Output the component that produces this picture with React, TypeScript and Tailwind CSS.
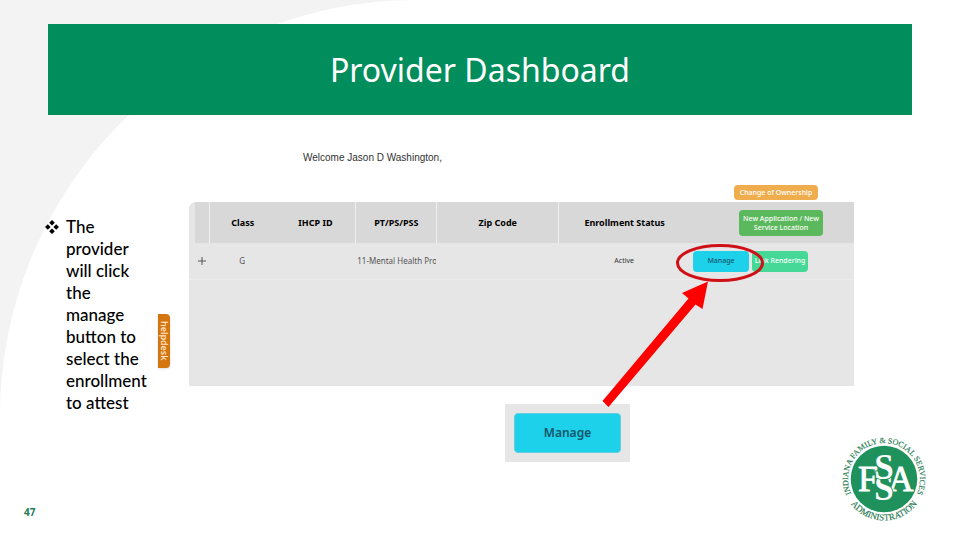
const headCell = "border-l border-[#f0f0f0] text-center align-middle";

function Backdrop() {
  return (
    <svg className="pointer-events-none absolute top-0 left-0 -z-10" width="416" height="416" viewBox="0 0 416 416" aria-hidden="true">
      <path d="M0 0H416A416 416 0 0 0 0 416Z" fill="#f3f3f3" />
    </svg>
  );
}

function DiamondBullet() {
  return (
    <svg className="mt-1 shrink-0" width="14" height="14" viewBox="0 0 14 14" aria-hidden="true">
      <path d="M7 0l2.8 2.8L7 5.6 4.2 2.8zM7 8.4l2.8 2.8L7 14l-2.8-2.8zM2.8 4.2L5.6 7 2.8 9.8 0 7zM11.2 4.2L14 7l-2.8 2.8L8.4 7z" />
    </svg>
  );
}

function Annotation() {
  return (
    <svg className="pointer-events-none absolute top-[125px] right-[84px]" width="170" height="170" viewBox="600 240 170 170" aria-hidden="true">
      <ellipse cx="720" cy="263" rx="42.5" ry="17.5" fill="none" stroke="#cf1016" strokeWidth="3" />
      <path d="M708 281.5L702.5 309L695.5 304.500L608.500 407L602.500 401L688.500 298.500L682 293Z" fill="#fe0000" />
    </svg>
  );
}

function AgencyLogo() {
  return (
    <svg width="90" height="90" viewBox="-45 -45 90 90" role="img" aria-label="Indiana Family & Social Services Administration">
      <defs>
        <path id="ring-top" d="M-31.200 18A36 36 0 1 1 31.200 18" />
        <path id="ring-bottom" d="M-41.500 0A41.500 41.500 0 0 0 41.500 0" />
      </defs>
      <circle r="33.300" fill="#1f915c" />
      <g fill="#1f7a50" fontFamily="'Liberation Serif', serif" fontSize="8" textAnchor="middle" stroke="#1f7a50" strokeWidth=".15">
        <text>
          <textPath href="#ring-top" startOffset="50%">INDIANA FAMILY &amp; SOCIAL SERVICES</textPath>
        </text>
        <text fontSize="9">
          <textPath href="#ring-bottom" startOffset="50%">ADMINISTRATION</textPath>
        </text>
      </g>
      <g fill="#fff" fontFamily="'Liberation Serif', serif" textAnchor="middle" stroke="#fff" strokeWidth=".8">
        <text x="-16" y="12" fontSize="36">F</text>
        <text x="17" y="12" fontSize="35">A</text>
        <g fontWeight="bold" stroke="#1f915c" strokeWidth="1.800" paintOrder="stroke">
          <text x="0" y="21" fontSize="35">S</text>
          <text x="0" y="0" fontSize="35">S</text>
        </g>
      </g>
    </svg>
  );
}

function ProviderTable() {
  return (
    <div className="h-[184px] overflow-hidden rounded-tl-lg bg-[#e6e6e6] font-['Noto_Sans',sans-serif]">
      <table className="w-full table-fixed border-separate border-spacing-0">
        <colgroup>
          <col className="w-5" />
          <col className="w-[10%]" />
          <col className="w-[12%]" />
          <col className="w-[81px]" />
          <col className="w-[122px]" />
          <col />
          <col className="w-[164px]" />
        </colgroup>
        <thead>
          <tr className="h-[41px] bg-[#d8d8d8] text-[9px] leading-3 text-black">
            <th className="border-l-6 border-[#e6e6e6]" aria-label="Expand" />
            <th className={headCell}>Class</th>
            <th className="text-center">IHCP ID</th>
            <th className={headCell}>PT/PS/PSS</th>
            <th className={headCell}>Zip Code</th>
            <th className={headCell}>Enrollment Status</th>
            <th className="p-0 pr-[31px] text-right align-middle">
              <button className="h-[26px] w-[84px] rounded-sm bg-[#5cb85c] text-[7px] leading-[9px] font-medium text-white">
                New Application / New Service Location
              </button>
            </th>
          </tr>
        </thead>
        <tbody>
          <tr className="h-[37px] text-[8px] leading-3 text-[#555]">
            <td className="border-b border-[#ebebeb] p-0 pl-2">
              <button className="block" aria-label="Expand row">
                <svg width="10" height="10" viewBox="0 0 10 10" stroke="#555"><path d="M5 1v8M1 5h8" /></svg>
              </button>
            </td>
            <td className="border-b border-[#ebebeb] text-center">G</td>
            <td className="border-b border-[#ebebeb]" />
            <td className="overflow-hidden border-b border-[#ebebeb] p-0 pl-0.5 whitespace-nowrap">11-Mental Health Prov</td>
            <td className="border-b border-[#ebebeb]" />
            <td className="border-b border-[#ebebeb] text-center text-[7px] text-[#333]">Active</td>
            <td className="border-b border-[#ebebeb] p-0 pl-[3px]">
              <div className="flex gap-[3px]">
                <button className="h-[21px] w-14 rounded-sm bg-[#1dd1ea] text-[7px] font-medium text-[#14556a]">Manage</button>
                <button className="h-[21px] w-14 rounded-sm bg-[#45d896] text-[7px] font-medium whitespace-nowrap text-white">Link Rendering</button>
              </div>
            </td>
          </tr>
        </tbody>
      </table>
    </div>
  );
}

export default function App() {
  return (
    <div className="relative isolate flex min-h-screen flex-col bg-white">
      <Backdrop />
      <header className="mx-12 mt-6 flex h-[91px] items-center justify-center bg-[#028d5c]">
        <h1 className="font-['Noto_Sans',sans-serif] text-[32px] leading-10 text-white">Provider Dashboard</h1>
      </header>

      <main className="flex">
        <ul className="w-[158px] shrink-0 pt-[101px] pr-1 pl-[45px]">
          <li className="flex gap-[7px] font-['Lato',sans-serif] text-[17px] leading-[22px] font-medium text-black">
            <DiamondBullet />
            <span className="w-[86px]">The provider will click the manage button to select the enrollment to attest</span>
          </li>
        </ul>
        <button className="mt-[199px] h-[54px] w-3 shrink-0 rounded-r-sm bg-[#d4750f] text-center font-['Open_Sans',sans-serif] text-[9px] leading-3 font-semibold text-[#ffe9d0] shadow-sm [writing-mode:vertical-rl]">
          helpdesk
        </button>
        <section className="relative mr-[106px] ml-[19px] flex-1">
          <p className="pt-[37px] pl-[114px] font-['Liberation_Sans',sans-serif] text-[10px] leading-3 text-[#333]">Welcome Jason D Washington,</p>
          <div className="mt-[21px] mb-0.5 flex justify-end pr-9">
            <button className="h-[15px] w-[84px] rounded-sm bg-[#efad4d] font-['Noto_Sans',sans-serif] text-[7px] leading-3 font-medium whitespace-nowrap text-white">
              Change of Ownership
            </button>
          </div>
          <ProviderTable />
          <div className="mt-[18px] ml-[316px] w-[125px] bg-[#e6e6e6] p-[9px]">
            <button className="h-10 w-full rounded-sm border border-[#62cedd] bg-[#1dd1ea] font-['Noto_Sans',sans-serif] text-xs font-semibold text-[#14556a]">
              Manage
            </button>
          </div>
          <Annotation />
        </section>
      </main>

      <footer className="-mt-7 flex items-end justify-between pr-[31px] pb-4 pl-6">
        <span className="font-['Open_Sans',sans-serif] text-[10px] leading-6 font-bold text-[#1b7b56]">47</span>
        <AgencyLogo />
      </footer>
    </div>
  );
}
